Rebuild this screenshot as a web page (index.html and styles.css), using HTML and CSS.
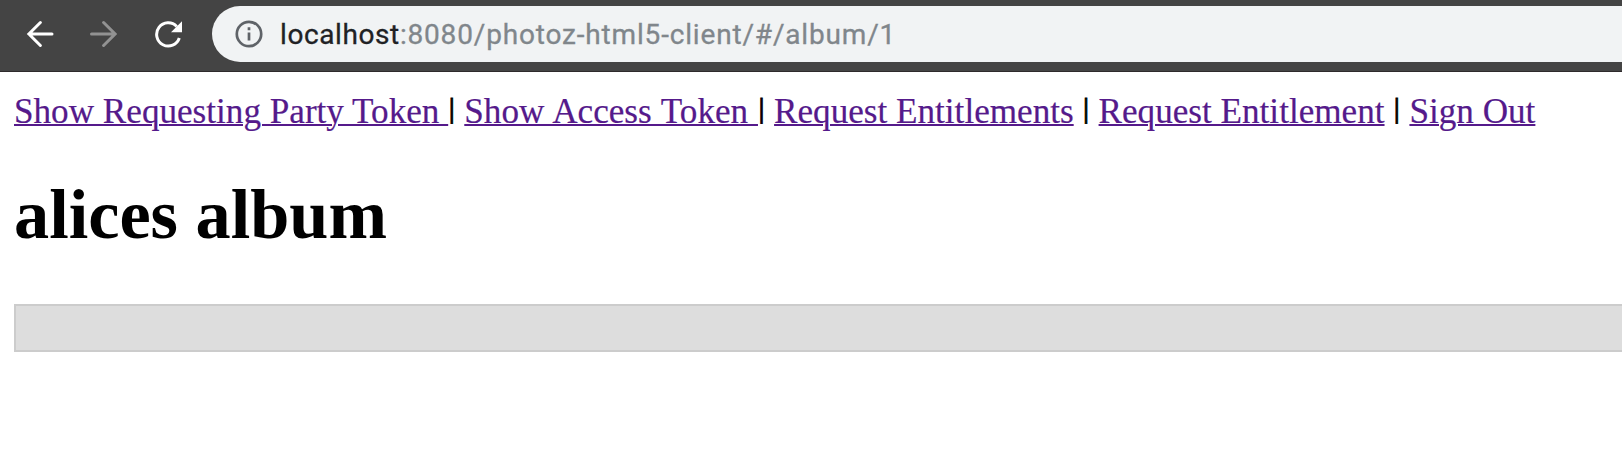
FILE: index.html
```
<!DOCTYPE html>
<html lang="en">
<head>
<meta charset="utf-8">
<title>alices album</title>
<link rel="stylesheet" href="styles.css">
</head>
<body>
<header class="toolbar">
  <svg class="icon back" viewBox="0 0 28 28"><path d="M26 14H3M14.4 2.5L2.9 14L14.4 25.5" stroke-linecap="round"/></svg>
  <svg class="icon forward" viewBox="0 0 28 28"><path d="M2.5 14H25M14.6 2.5L26.1 14L14.6 25.5" stroke-linecap="round"/></svg>
  <svg class="icon reload" viewBox="0 0 28 28"><path d="M25.3 18A11.6 11.6 0 1 1 22.7 6.5"/><path class="head" d="M28 1.2v11H17z"/></svg>
  <div class="address">
    <svg class="info" viewBox="0 0 28 28"><circle cx="14" cy="14" r="12.2"/><path d="M14 12.6v8M14 7.2v3"/></svg>
    <span class="url"><span class="host">localhost</span>:8080/photoz-html5-client/#/album/1</span>
  </div>
</header>
<main class="page">
  <nav class="links"><a href="#">Show Requesting Party Token </a><span class="bar">|</span> <a class="access" href="#">Show Access Token </a><span class="bar">|</span> <a href="#">Request Entitlements</a> <span class="bar">|</span> <a href="#">Request Entitlement</a> <span class="bar">|</span> <a href="#">Sign Out</a></nav>
  <h1 class="title">alices album</h1>
  <div class="panel"></div>
</main>
</body>
</html>
```
FILE: styles.css
```
body {
  margin: 0;
  background: #fff;
  overflow: hidden;
}
.toolbar {
  box-sizing: border-box;
  height: 72px;
  padding: 6px 0 9px 26px;
  display: flex;
  align-items: center;
  background: #444;
  border-bottom: 1px solid #2e2a2c;
}
.icon {
  width: 28px;
  height: 28px;
  flex: none;
  fill: none;
  stroke: #fff;
  stroke-width: 3;
}
.forward {
  margin-left: 35px;
  stroke: #929292;
}
.reload {
  margin-left: 37px;
}
.reload .head {
  fill: #fff;
  stroke: none;
}
.address {
  box-sizing: border-box;
  flex: 1;
  height: 56px;
  margin-left: 30px;
  padding-left: 22px;
  display: flex;
  align-items: center;
  border-radius: 28px 0 0 28px;
  background: #f1f3f4;
}
.info {
  width: 28px;
  height: 28px;
  flex: none;
  margin-left: 0.5px;
  fill: none;
  stroke: #5f6368;
  stroke-width: 2.7;
}
.url {
  padding-top: 1px;
  margin-left: 17.5px;
  font: 28px/55px Roboto, sans-serif;
  letter-spacing: 0.83px;
  color: #80868b;
  white-space: nowrap;
  -webkit-text-stroke: 0.3px;
}
.host {
  letter-spacing: 0.6px;
  color: #202124;
}
.page {
  padding: 20px 0 0 14px;
  font-family: "Liberation Serif", "Times New Roman", serif;
  color: #000;
}
.links {
  font-size: 35.15px;
  line-height: 40px;
  white-space: nowrap;
  -webkit-text-stroke: 0.2px;
}
.links a {
  color: #551a8b;
  text-decoration-thickness: 2px;
}
.links .access {
  word-spacing: 1px;
}
.bar {
  display: inline-block;
  width: 7.3px;
  clip-path: inset(0 0 8px 0);
  -webkit-text-stroke: 0.8px;
}
.title {
  margin: 42px 0 50px;
  font-size: 70.3px;
  line-height: 80px;
}
.panel {
  box-sizing: border-box;
  height: 48px;
  border: 2px solid #ccc;
  border-right: 0;
  background: #ddd;
}
```
